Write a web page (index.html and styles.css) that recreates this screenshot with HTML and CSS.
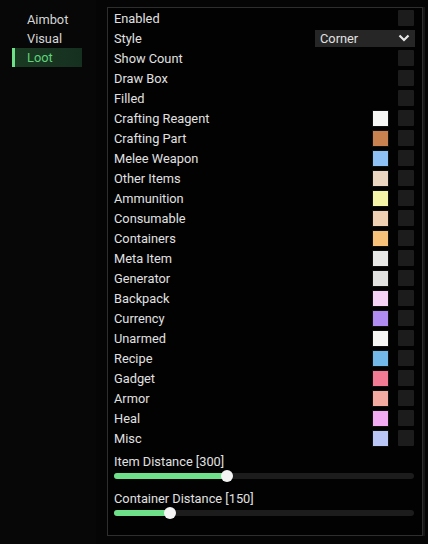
FILE: index.html
```html
<!DOCTYPE html>
<html>
<head>
<meta charset="utf-8">
<link rel="stylesheet" href="styles.css">
</head>
<body>
<div class="app">
  <nav class="side">
    <div class="tab">Aimbot</div>
    <div class="tab">Visual</div>
    <div class="tab active">Loot</div>
  </nav>
  <div class="panel">
    <div class="row"><span>Enabled</span><i class="chk"></i></div>
    <div class="row"><span>Style</span><div class="combo"><span>Corner</span><svg width="12" height="8" viewBox="0 0 12 8"><path d="M1.5 1.5 L6 6 L10.5 1.5" fill="none" stroke="#e6e6e6" stroke-width="2.2"/></svg></div></div>
    <div class="row"><span>Show Count</span><i class="chk"></i></div>
    <div class="row"><span>Draw Box</span><i class="chk"></i></div>
    <div class="row"><span>Filled</span><i class="chk"></i></div>
    <div class="row"><span>Crafting Reagent</span><b class="sw" style="background:#f6f6f4"></b><i class="chk"></i></div>
    <div class="row"><span>Crafting Part</span><b class="sw" style="background:#c9824f"></b><i class="chk"></i></div>
    <div class="row"><span>Melee Weapon</span><b class="sw" style="background:#8ec2f7"></b><i class="chk"></i></div>
    <div class="row"><span>Other Items</span><b class="sw" style="background:#ecd6c2"></b><i class="chk"></i></div>
    <div class="row"><span>Ammunition</span><b class="sw" style="background:#f6f4a6"></b><i class="chk"></i></div>
    <div class="row"><span>Consumable</span><b class="sw" style="background:#f0d0b2"></b><i class="chk"></i></div>
    <div class="row"><span>Containers</span><b class="sw" style="background:#f8c17a"></b><i class="chk"></i></div>
    <div class="row"><span>Meta Item</span><b class="sw" style="background:#e8e8e6"></b><i class="chk"></i></div>
    <div class="row"><span>Generator</span><b class="sw" style="background:#e2e2e0"></b><i class="chk"></i></div>
    <div class="row"><span>Backpack</span><b class="sw" style="background:#f6d2f6"></b><i class="chk"></i></div>
    <div class="row"><span>Currency</span><b class="sw" style="background:#b08cf2"></b><i class="chk"></i></div>
    <div class="row"><span>Unarmed</span><b class="sw" style="background:#f6f6f4"></b><i class="chk"></i></div>
    <div class="row"><span>Recipe</span><b class="sw" style="background:#72b9ea"></b><i class="chk"></i></div>
    <div class="row"><span>Gadget</span><b class="sw" style="background:#f27a92"></b><i class="chk"></i></div>
    <div class="row"><span>Armor</span><b class="sw" style="background:#f4aaa0"></b><i class="chk"></i></div>
    <div class="row"><span>Heal</span><b class="sw" style="background:#f2aaf2"></b><i class="chk"></i></div>
    <div class="row"><span>Misc</span><b class="sw" style="background:#bac6f6"></b><i class="chk"></i></div>
    <div class="slider">
      <div class="slabel">Item Distance [300]</div>
      <div class="track"><div class="fill" style="width:113px"></div><div class="knob" style="left:107px"></div></div>
    </div>
    <div class="slider">
      <div class="slabel">Container Distance [150]</div>
      <div class="track"><div class="fill" style="width:56px"></div><div class="knob" style="left:50px"></div></div>
    </div>
  </div>
</div>
</body>
</html>
```
FILE: styles.css
```css
* { box-sizing: border-box; }
html, body { margin: 0; padding: 0; background: #050505; }
body {
  width: 428px; height: 544px; overflow: hidden;
  font-family: Roboto, "Liberation Sans", sans-serif;
  font-size: 12.8px; color: #e0e0e0;
}
.app { display: flex; height: 544px; }
.side {
  width: 96px; flex: none;
  display: flex; flex-direction: column;
  padding: 10px 0 0 12px;
  background: #070707;
}
.tab {
  height: 19px; line-height: 19px;
  padding-left: 15px; color: #d6d6d6;
  margin-right: 2px;
}
.tab.active {
  width: 70px;
  color: #5fd37a;
  background: linear-gradient(90deg, #1a3a22, #163020);
  border-left: 3px solid #6fe08a;
  padding-left: 12px;
}
.panel {
  margin: 7px 5px 8px 11px;
  flex: 1;
  border: 1px solid #2e2e2e;
  box-shadow: 2px 0 0 #161616;
  background: #020202;
  padding: 0 8px 0 6px;
  display: flex; flex-direction: column;
}
.row {
  height: 20px;
  display: flex; align-items: center;
  gap: 9px;
}
.row > span { flex: 1; }
.chk {
  width: 16px; height: 16px;
  background: #1c1c1c;
  border-radius: 1px;
}
.sw {
  width: 17px; height: 17px;
  border: 1px solid #111;
}
.combo {
  width: 100px; height: 17px;
  background: #262626;
  display: flex; align-items: center; justify-content: space-between;
  padding: 0 5px 0 5px;
  margin-right: -1px;
}
.slider { padding-top: 6px; }
.slabel { height: 15px; line-height: 15px; }
.track {
  position: relative;
  margin-top: 4px;
  height: 6px;
  background: #1c1c1c;
  border-radius: 3px;
  margin-bottom: 6px;
}
.fill {
  height: 6px;
  background: #6fe08a;
  border-radius: 3px;
}
.knob {
  position: absolute;
  top: -3px;
  width: 12px; height: 12px; border-radius: 50%;
  background: #f4f4f4;
}
```
